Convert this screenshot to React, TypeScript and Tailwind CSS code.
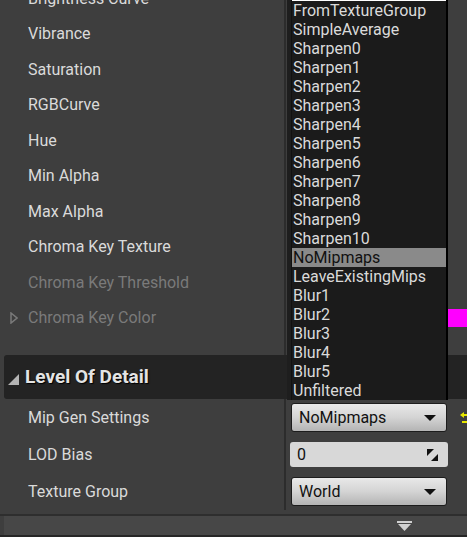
import React from "react"

const topRows = [
  { label: "Brightness Curve" },
  { label: "Vibrance" },
  { label: "Saturation" },
  { label: "RGBCurve" },
  { label: "Hue" },
  { label: "Min Alpha" },
  { label: "Max Alpha" },
  { label: "Chroma Key Texture" },
  { label: "Chroma Key Threshold", disabled: true },
  { label: "Chroma Key Color", disabled: true, expander: true, swatch: true },
]

const mipOptions = [
  "FromTextureGroup",
  "SimpleAverage",
  "Sharpen0",
  "Sharpen1",
  "Sharpen2",
  "Sharpen3",
  "Sharpen4",
  "Sharpen5",
  "Sharpen6",
  "Sharpen7",
  "Sharpen8",
  "Sharpen9",
  "Sharpen10",
  "NoMipmaps",
  "LeaveExistingMips",
  "Blur1",
  "Blur2",
  "Blur3",
  "Blur4",
  "Blur5",
  "Unfiltered",
]

function ComboArrow() {
  return (
    <svg width="12" height="6" viewBox="0 0 12 6">
      <polygon points="0,0 12,0 6,6" fill="#111" />
    </svg>
  )
}

function Combo({ value }: { value: string }) {
  return (
    <div className="flex h-[29px] w-[156px] shrink-0 items-center justify-between rounded-[3px] border border-[#1c1c1c] bg-gradient-to-b from-[#e8e8e8] via-[#d4d4d4] to-[#b4b4b4] pl-[7px] pr-[10px] text-[16px] text-[#111]">
      <span>{value}</span>
      <ComboArrow />
    </div>
  )
}

function SpinIcon() {
  return (
    <svg width="11" height="12" viewBox="0 0 11 12">
      <polygon points="0,0 7,0 0,7" fill="#111" />
      <polygon points="11,5 11,12 4,12" fill="#111" />
    </svg>
  )
}

function ResetIcon() {
  return (
    <svg className="shrink-0" width="10" height="12" viewBox="0 0 10 12">
      <polygon points="0,3 4,0 4,6" fill="#e6e600" />
      <rect x="3" y="2" width="7" height="2" fill="#e6e600" />
      <rect x="2" y="9" width="8" height="2" fill="#e6e600" />
    </svg>
  )
}

export default function App() {
  return (
    <div className="relative h-[537px] w-[467px] overflow-hidden bg-[#3e3e3e] font-['Roboto',sans-serif] text-[16px] text-[#dadada]">
      {/* Property rows */}
      <div className="-mt-[19px] flex flex-col">
        {topRows.map((row) => (
          <div key={row.label} className="flex h-[35.5px] items-stretch">
            <div className="relative flex w-[284px] items-center pl-[28px]">
              {row.expander && (
                <svg className="absolute left-[10px]" width="8" height="12" viewBox="0 0 8 12">
                  <polygon points="1,1 7,6 1,11" fill="none" stroke="#7a7a7a" strokeWidth="1.5" />
                </svg>
              )}
              <span className={row.disabled ? "text-[#7a7a7a]" : ""}>{row.label}</span>
            </div>
            <div className="w-[2px] bg-[#2c2c2c]" />
            <div className="flex flex-1 items-center pl-[5px]">
              {row.swatch && <div className="h-[18px] w-full bg-[#ff00ff]" />}
            </div>
          </div>
        ))}
        <div className="flex h-[19px]">
          <div className="w-[284px]" />
          <div className="w-[2px] bg-[#2c2c2c]" />
        </div>
      </div>

      {/* Category header */}
      <div className="ml-[4px] flex h-[44px] items-center gap-[6px] rounded-l-[3px] bg-[#232323] pl-[4px]">
        <svg width="11" height="11" viewBox="0 0 11 11" className="mt-[4px]">
          <polygon points="11,0 11,11 0,11" fill="#b4b4b4" />
        </svg>
        <span className="text-[19px] font-bold text-[#e4e4e4] [text-shadow:1px_1px_1px_#000]">Level Of Detail</span>
      </div>

      {/* Level of detail rows */}
      <div className="flex flex-col">
        <div className="flex h-[37px] items-stretch">
          <div className="flex w-[284px] shrink-0 items-center pl-[28px]">Mip Gen Settings</div>
          <div className="w-[2px] shrink-0 bg-[#2c2c2c]" />
          <div className="flex flex-1 items-center gap-[13px] pl-[5px]">
            <Combo value="NoMipmaps" />
            <ResetIcon />
          </div>
        </div>
        <div className="flex h-[37px] items-stretch">
          <div className="flex w-[284px] items-center pl-[28px]">LOD Bias</div>
          <div className="w-[2px] bg-[#2c2c2c]" />
          <div className="flex flex-1 items-center pl-[4px]">
            <div className="flex h-[25px] w-[158px] items-center justify-between rounded-[3px] bg-[#d8d8d8] pl-[7px] pr-[10px] text-[#111]">
              <span>0</span>
              <SpinIcon />
            </div>
          </div>
        </div>
        <div className="flex h-[37px] items-stretch">
          <div className="flex w-[284px] items-center pl-[28px]">Texture Group</div>
          <div className="w-[2px] bg-[#2c2c2c]" />
          <div className="flex flex-1 items-center pl-[5px]">
            <Combo value="World" />
          </div>
        </div>
      </div>

      {/* Bottom bar */}
      <div className="mt-[4px] h-[2px] bg-[#2e2e2e]" />
      <div className="ml-[4px] flex h-[19px] items-center justify-end bg-[#474747] pr-[55px]">
        <svg width="15" height="10" viewBox="0 0 15 10">
          <rect x="0" y="0" width="15" height="2" fill="#d0d0d0" />
          <polygon points="1,3 14,3 7.5,10" fill="#d0d0d0" />
        </svg>
      </div>
      <div className="h-[2px] bg-[#262626]" />

      {/* Open dropdown menu */}
      <div className="absolute left-[287px] top-0 flex h-[400px] w-[161px] bg-[#1e1e1e] pl-[4px]">
        <div className="flex flex-1 flex-col border-l border-[#111] border-r-2 border-r-black bg-[#1b1b1b]">
          <div className="h-[1px] bg-white" />
          {mipOptions.map((opt) => (
            <div
              key={opt}
              className={
                "h-[19px] pl-[1px] leading-[19px] " +
                (opt === "NoMipmaps" ? "bg-[#8a8a8a] text-[#111]" : "text-[#dadada]")
              }
            >
              {opt}
            </div>
          ))}
        </div>
      </div>
    </div>
  )
}
